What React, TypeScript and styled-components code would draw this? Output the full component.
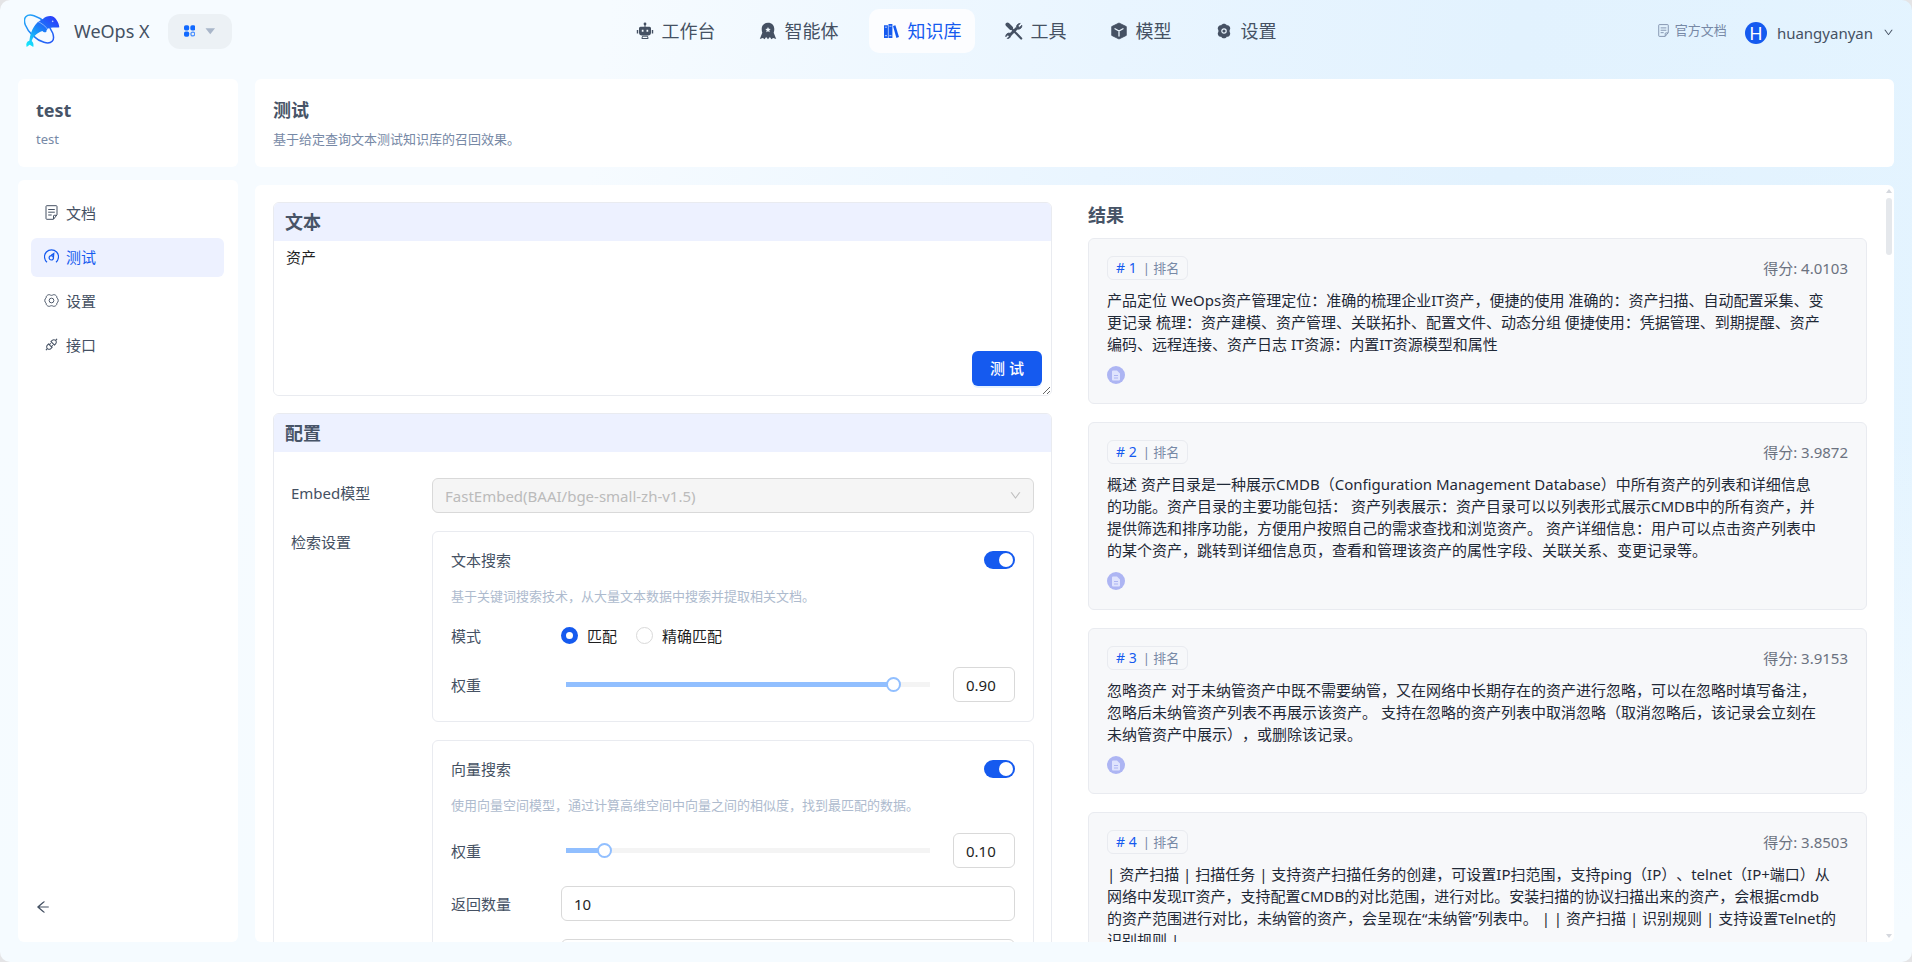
import React, { useState } from 'react';
import styled, { createGlobalStyle } from 'styled-components';
import { AiOutlineApi, AiOutlineArrowLeft, AiOutlineDown } from 'react-icons/ai';

const color = {
  primary: '#155aef',
  heading: '#475467',
  text: '#455163',
  strong: '#1f2937',
  muted: '#7789a6',
  hint: '#aebbce',
  line: '#e9ebf0',
  inputLine: '#d9d9d9',
  band: '#edf1ff',
};

const GlobalStyle = createGlobalStyle`
  * { box-sizing: border-box; }
  body {
    margin: 0;
    background: #e4e4e6;
    color: ${color.text};
    font-family: "Noto Sans", "Noto Sans CJK SC", sans-serif;
    font-size: 15px;
    line-height: 22px;
    text-spacing-trim: space-all;
  }
  button, input, select, textarea { font: inherit; color: inherit; margin: 0; }
  h1, h2, p, ul, ol { margin: 0; padding: 0; }
  ul, ol { list-style: none; }
  a { color: inherit; text-decoration: none; }
`;

const Page = styled.div`
  display: flex;
  flex-direction: column;
  height: 100vh;
  overflow: hidden;
  border-radius: 10px;
  background:
    linear-gradient(180deg, rgba(245, 251, 255, 0) 45%, #f5fbff 96%),
    linear-gradient(97deg, #f6fbff 0%, #f6fbff 30%, #e9f5ff 55%, #e2f2fe 75%, #e4f4ff 100%);
`;

/* ---------- header ---------- */

const Header = styled.header`
  display: grid;
  grid-template-columns: 1fr auto 1fr;
  align-items: center;
  flex: none;
  height: 62px;
  padding: 0 18px;
`;

const Brand = styled.div`
  display: flex;
  align-items: center;
  padding-left: 6px;
`;

const BrandName = styled.span`
  margin: 0 18px 0 14px;
  font-size: 18px;
`;

const AppSwitch = styled.button`
  display: flex;
  align-items: center;
  gap: 10px;
  height: 35px;
  width: 64px;
  padding: 0 16px;
  border: 0;
  border-radius: 12px;
  background: #ecf1f5;
`;

const Nav = styled.nav`
  display: flex;
  gap: 17px;
`;

const NavItem = styled.a<{ $active?: boolean }>`
  display: flex;
  align-items: center;
  gap: 8px;
  height: 44px;
  padding: 0 13px;
  border-radius: 10px;
  font-size: 18px;
  color: ${(p) => (p.$active ? color.primary : color.text)};
  background: ${(p) => (p.$active ? '#fcfdff' : 'transparent')};
`;

const Account = styled.div`
  display: flex;
  align-items: center;
  justify-content: flex-end;
  gap: 18px;
`;

const DocLink = styled.a`
  display: flex;
  align-items: center;
  gap: 5px;
  padding-bottom: 2px;
  font-size: 13px;
  color: ${color.muted};
`;

const UserButton = styled.button`
  display: flex;
  align-items: center;
  gap: 10px;
  padding: 3px 0 0;
  border: 0;
  background: none;
  svg { width: 11px; height: 11px; }
`;

const Avatar = styled.span`
  width: 22px;
  height: 22px;
  border-radius: 50%;
  background: ${color.primary};
  color: #fff;
  font-size: 18px;
  line-height: 22px;
  text-align: center;
`;

/* ---------- page frame ---------- */

const Frame = styled.div`
  display: flex;
  flex: 1;
  gap: 17px;
  min-height: 0;
  padding: 17px 18px 20px;
`;

const Card = styled.section`
  border-radius: 6px;
  background: #fff;
`;

const Side = styled.aside`
  display: flex;
  flex-direction: column;
  flex: none;
  gap: 13px;
  width: 220px;
`;

const Main = styled.main`
  display: flex;
  flex-direction: column;
  flex: 1;
  gap: 18px;
  min-width: 0;
`;

const TitleCard = styled(Card)`
  flex: none;
  height: 88px;
  padding: 19px 18px;
`;

const Title = styled.h1`
  font-size: 18px;
  line-height: 24px;
  color: ${color.heading};
`;

const SubTitle = styled.p`
  margin-top: 6px;
  font-size: 13px;
  color: ${color.muted};
`;

const MenuCard = styled(Card)`
  display: flex;
  flex: 1;
  flex-direction: column;
  justify-content: space-between;
  padding: 14px 14px 25px 13px;
`;

const Menu = styled.ul`
  display: flex;
  flex-direction: column;
  gap: 5px;
`;

const MenuLink = styled.a<{ $active?: boolean }>`
  display: flex;
  align-items: center;
  gap: 7px;
  height: 39px;
  padding: 0 13px 2px;
  border-radius: 6px;
  color: ${(p) => (p.$active ? color.primary : color.text)};
  background: ${(p) => (p.$active ? color.band : 'transparent')};
  svg { width: 15px; height: 15px; }
`;

const BackButton = styled.button`
  display: flex;
  width: 20px;
  height: 20px;
  margin-left: 2px;
  padding: 2px;
  border: 0;
  background: none;
  svg { width: 16px; height: 16px; }
`;

const Content = styled(Card)`
  display: flex;
  flex: 1;
  min-height: 0;
  overflow: hidden;
  padding-left: 18px;
`;

const Columns = styled.div`
  display: grid;
  grid-template-columns: 1fr 1fr;
  gap: 36px;
  flex: 1;
  min-width: 0;
  padding-top: 17px;
  align-items: start;
`;

const ScrollBar = styled.div`
  display: flex;
  flex-direction: column;
  align-items: center;
  flex: none;
  width: 8px;
  margin: 3px 1px 3px 18px;
`;

const ScrollArrow = styled.span<{ $down?: boolean }>`
  border: 3px solid transparent;
  border-top-width: ${(p) => (p.$down ? 4 : 0)}px;
  border-bottom-width: ${(p) => (p.$down ? 0 : 4)}px;
  border-top-color: ${(p) => (p.$down ? '#d5d8de' : 'transparent')};
  border-bottom-color: ${(p) => (p.$down ? 'transparent' : '#d5d8de')};
  margin: 1px 0;
`;

const ScrollThumb = styled.span`
  width: 6px;
  height: 57px;
  margin: 4px 0 auto;
  border-radius: 3px;
  background: #e5e8ec;
`;

/* ---------- left column ---------- */

const Panels = styled.div`
  display: flex;
  flex-direction: column;
  gap: 17px;
`;

const Panel = styled.section`
  position: relative;
  overflow: hidden;
  border: 1px solid ${color.line};
  border-radius: 6px;
`;

const PanelTitle = styled.h2`
  padding: 7px 11px;
  font-size: 18px;
  line-height: 24px;
  color: ${color.heading};
  background: ${color.band};
`;

const QueryBox = styled.textarea`
  display: block;
  width: 100%;
  height: 154px;
  padding: 5px 12px;
  border: 0;
  outline: 0;
  resize: vertical;
  color: #1f1f1f;
  background: #fff;
`;

const TestButton = styled.button`
  position: absolute;
  right: 9px;
  bottom: 9px;
  width: 70px;
  height: 35px;
  padding: 0 0 2px;
  border: 0;
  border-radius: 6px;
  color: #fff;
  font-weight: 500;
  background: ${color.primary};
  box-shadow: 0 2px 0 rgba(5, 125, 255, 0.1);
`;

const Form = styled.div`
  display: grid;
  grid-template-columns: 141px 1fr;
  row-gap: 18px;
  padding: 26px 17px 26px;
`;

const FormLabel = styled.label<{ $multiline?: boolean }>`
  padding-top: ${(p) => (p.$multiline ? 0 : 4)}px;
`;

const SelectWrap = styled.div`
  position: relative;
  svg {
    position: absolute;
    right: 12px;
    top: 11px;
    width: 13px;
    height: 13px;
    color: #bfbfbf;
  }
`;

const Select = styled.select`
  appearance: none;
  display: block;
  width: 100%;
  height: 35px;
  padding: 0 12px;
  border: 1px solid ${color.inputLine};
  border-radius: 6px;
  color: #bbb;
  opacity: 1;
  background: #f5f5f5;
`;

const Boxes = styled.div`
  display: flex;
  flex-direction: column;
  gap: 18px;
`;

const Box = styled.fieldset`
  display: flex;
  flex-direction: column;
  min-width: 0;
  margin: 0;
  padding: 16px 18px 19px;
  border: 1px solid ${color.line};
  border-radius: 6px;
`;

const BoxHead = styled.div`
  display: flex;
  align-items: center;
  justify-content: space-between;
  height: 24px;
`;

const Hint = styled.p`
  margin: 13px 0 17px;
  font-size: 13px;
  color: ${color.hint};
`;

const Row = styled.div`
  display: flex;
  align-items: center;
  height: 35px;
  & + & { margin-top: 18px; }
`;

const ModeRow = styled(Row)`
  height: 23px;
  & + ${Row} { margin-top: 20px; }
`;

const RowLabel = styled.label`
  flex: none;
  width: 110px;
`;

const Switch = styled.input`
  appearance: none;
  display: flex;
  width: 31px;
  height: 18px;
  padding: 2px;
  border-radius: 9px;
  background: #bfbfbf;
  &::before {
    content: '';
    width: 14px;
    height: 14px;
    border-radius: 50%;
    background: #fff;
  }
  &:checked { justify-content: flex-end; background: ${color.primary}; }
`;

const RadioLabel = styled.label`
  display: flex;
  align-items: center;
  gap: 9px;
  margin-right: 19px;
  color: #1f1f1f;
`;

const Radio = styled.input`
  appearance: none;
  width: 17px;
  height: 17px;
  border: 1px solid ${color.inputLine};
  border-radius: 50%;
  background: #fff;
  &:checked { border: 5px solid ${color.primary}; }
`;

const Slider = styled.input<{ $fill: number }>`
  appearance: none;
  flex: 1;
  min-width: 0;
  height: 15px;
  margin-right: 16px;
  background: none;
  &::-webkit-slider-runnable-track {
    height: 5px;
    margin: 0;
    border-radius: 2px;
    background: linear-gradient(
        90deg,
        transparent 5px,
        #91bfff 5px,
        #91bfff ${(p) => p.$fill}%,
        #f4f4f4 ${(p) => p.$fill}%,
        #f4f4f4 calc(100% - 7px),
        transparent calc(100% - 7px)
      );
  }
  &::-webkit-slider-thumb {
    appearance: none;
    width: 15px;
    height: 15px;
    margin-top: -5px;
    border: 2px solid #91bfff;
    border-radius: 50%;
    background: #fff;
  }
`;

const Input = styled.input<{ $short?: boolean }>`
  flex: ${(p) => (p.$short ? 'none' : '1')};
  width: ${(p) => (p.$short ? '62px' : 'auto')};
  min-width: 0;
  height: 35px;
  padding: 0 12px;
  border: 1px solid ${color.inputLine};
  border-radius: 6px;
  color: #1f1f1f;
  background: #fff;
`;

/* ---------- results ---------- */

const ResultsTitle = styled.h2`
  margin: 1px 0 11px;
  font-size: 18px;
  line-height: 24px;
  color: ${color.heading};
`;

const ResultList = styled.ol`
  display: flex;
  flex-direction: column;
  gap: 18px;
`;

const ResultCard = styled.li`
  padding: 17px 18px 19px;
  border: 1px solid ${color.line};
  border-radius: 6px;
  background: #f7f8fa;
`;

const ResultHead = styled.div`
  display: flex;
  align-items: center;
  justify-content: space-between;
  color: #6b7280;
`;

const Rank = styled.span`
  display: flex;
  align-items: center;
  gap: 6px;
  height: 24px;
  padding: 0 8px;
  border: 1px solid ${color.line};
  border-radius: 6px;
  font-size: 13px;
  color: ${color.muted};
  b { font-size: 14px; font-weight: 400; color: ${color.primary}; }
`;

const ResultText = styled.p`
  margin: 9px 0 11px;
  color: ${color.strong};
  white-space: pre-line;
`;

const FileBadge = styled.a`
  display: flex;
  align-items: center;
  justify-content: center;
  width: 18px;
  height: 18px;
  border-radius: 50%;
  background: #adb5f3;
`;

/* ---------- drawings ---------- */

const Logo = () => (
  <svg width="36" height="34" viewBox="71 42 108 102" aria-hidden="true">
    <defs>
      <linearGradient id="fish" x1="0.9" y1="0.1" x2="0.15" y2="1">
        <stop offset="0" stopColor="#2a3ffb" />
        <stop offset="0.45" stopColor="#1c7df8" />
        <stop offset="1" stopColor="#16e4fb" />
      </linearGradient>
      <linearGradient id="ring" x1="0" y1="0.5" x2="1" y2="0.5">
        <stop offset="0" stopColor="#23a5f8" />
        <stop offset="1" stopColor="#2459f6" />
      </linearGradient>
    </defs>
    <ellipse cx="116" cy="87" rx="54" ry="27" transform="rotate(43 116 87)" fill="none" stroke="url(#ring)" strokeWidth="4.500" />
    <path
      d="M177 82C176 68 165 48 150 48C141 48 133 51 127 58C106 66 92 88 87 122C79 124 76 131 79 141L88 134L99 141C101 132 98 126 94 123C99 108 110 99 126 93C129 97 134 98 138 96C138 91 140 88 146 84C156 80 168 84 177 82Z"
      fill="url(#fish)"
    />
    <path d="M108 62C124 69 138 80 146 93" fill="none" stroke="#e8f3ff" strokeWidth="1.500" />
    <circle cx="157" cy="64" r="2.500" fill="#bfd4ff" />
  </svg>
);

const AppsIcon = () => (
  <svg width="12" height="12" viewBox="0 0 12 12" aria-hidden="true" fill="#1169ff">
    <rect x="0" y="0" width="5.400" height="5.400" rx="1.800" />
    <rect x="6.600" y="0" width="5.400" height="5.400" rx="1.800" />
    <rect x="0" y="6.600" width="5.400" height="5.400" rx="1.800" />
    <circle cx="9.200" cy="9.200" r="2" fill="none" stroke="#4a90ff" strokeWidth="1.300" />
  </svg>
);

const Caret = () => (
  <svg width="11" height="7" viewBox="0 0 11 7" aria-hidden="true">
    <path d="M0.500 0H10.500L5.500 6.500Z" fill="#a9b6c9" />
  </svg>
);

const RobotIcon = () => (
  <svg width="18" height="18" viewBox="0 0 18 18" aria-hidden="true" fill="currentColor">
    <circle cx="9" cy="2" r="1.400" />
    <path d="M8.500 2h1v3h-1zM0.800 8h1.400v3.400H0.800zM15.800 8h1.400v3.400h-1.400z" />
    <path fillRule="evenodd" d="M4.500 4.800h9a1.500 1.500 0 0 1 1.500 1.500V10.500a3 3 0 0 1-3 3H6a3 3 0 0 1-3-3V6.300a1.500 1.500 0 0 1 1.500-1.500zM5.800 7.800v2h1.700V7.800zM10.500 7.800v2h1.700V7.800z" />
    <path d="M6.500 14.200h5l.6 2.300H5.900z" fill="none" stroke="currentColor" />
  </svg>
);

const AgentIcon = () => (
  <svg width="18" height="18" viewBox="0 0 18 18" aria-hidden="true" fill="currentColor">
    <path
      fillRule="evenodd"
      d="M9 .8c3.900 0 6.300 2.700 6.300 6.200 0 1.600-.2 2.700-.6 3.800L17.200 17l-3.100-1-1.700 1.300-1.500-2.300-1.900 2.300L7.100 15l-1.500 2.300L3.900 16l-3.100 1 2.500-6.200C2.900 9.700 2.700 8.600 2.700 7 2.700 3.500 5.100.8 9 .8zM9 5l-.8 1.800-1.900.2 1.400 1.300-.4 1.900L9 9.200l1.700 1-.4-1.900L11.700 7l-1.900-.2z"
    />
  </svg>
);

const BooksIcon = () => (
  <svg width="18" height="18" viewBox="0 0 18 18" aria-hidden="true" fill="currentColor">
    <path d="M2 3.300h3.900V16H2zM6.500 2h3.900v14H6.500z" />
    <path d="M11 4l2.400-.8 3.600 11.900-2.600.9z" />
    <path d="M2.900 5.200h2.100M7.400 4.200h2.100M2.900 13.700h2.100M7.400 13.700h2.100" stroke="#fff" strokeWidth="0.700" />
  </svg>
);

const ToolsIcon = () => (
  <svg width="18" height="18" viewBox="0 0 18 18" aria-hidden="true" fill="none" stroke="currentColor">
    <path d="M2.500 2.500L6 6" strokeWidth="4" strokeLinecap="round" />
    <path d="M6 6l10.200 10.500" strokeWidth="2.200" strokeLinecap="round" />
    <path d="M12 6L5 13" strokeWidth="2.800" />
    <path d="M15.300 1.500l-2.100 2.100.3 1.300 1.300.3 2-2a3.300 3.300 0 0 1-4.500 3.700 3.300 3.300 0 0 1 3-5.400z" fill="currentColor" strokeWidth="0.800" />
    <path d="M2.200 16.500l1.900-1.900-.3-1.200-1.300-.3L.8 14.800a3.200 3.200 0 0 1 4.300-3.500 3.200 3.200 0 0 1-2.900 5.200z" fill="currentColor" strokeWidth="0.800" />
  </svg>
);

const CubeIcon = () => (
  <svg width="18" height="18" viewBox="0 0 18 18" aria-hidden="true">
    <path d="M9 1l7.300 3.600v8.800L9 17l-7.300-3.600V4.600z" fill="currentColor" stroke="currentColor" strokeWidth="0.800" strokeLinejoin="round" />
    <path d="M5 6.800l4 2.200 4-2.200M9 9v5" fill="none" stroke="#eaf5fe" strokeWidth="1.300" strokeLinecap="round" />
  </svg>
);

/* six lobes around a hub */
const gearPath =
  'M9 1.800C10.300 1.800 11.200 2.300 11.700 3.300C12.800 3.200 13.800 3.400 14.600 4.600C15.400 5.900 15.400 6.900 14.800 7.800C14.400 8.500 14.400 9.500 14.800 10.200C15.400 11.100 15.400 12.100 14.600 13.400C13.800 14.600 12.800 14.800 11.700 14.700C11.200 15.700 10.300 16.200 9 16.200C7.700 16.200 6.800 15.700 6.300 14.700C5.200 14.800 4.200 14.600 3.400 13.400C2.600 12.100 2.600 11.100 3.200 10.200C3.600 9.500 3.600 8.500 3.200 7.800C2.600 6.900 2.600 5.900 3.400 4.600C4.200 3.400 5.200 3.200 6.300 3.300C6.800 2.300 7.700 1.800 9 1.800Z';

const GearIcon = () => (
  <svg width="18" height="18" viewBox="0 0 18 18" aria-hidden="true">
    <path d={gearPath} fill="currentColor" />
    <circle cx="9" cy="9" r="2.200" fill="none" stroke="#eaf5fe" strokeWidth="1.200" />
  </svg>
);

const GearOutlineIcon = () => (
  <svg viewBox="1 1 16 16" aria-hidden="true" fill="none" stroke="currentColor">
    <path d={gearPath} transform="rotate(90 9 9)" />
    <circle cx="9" cy="9" r="2.500" />
  </svg>
);

const NoteIcon = ({ size = 15 }: { size?: number }) => (
  <svg width={size} height={size} viewBox="0 0 15 15" aria-hidden="true" fill="none" stroke="currentColor">
    <path d="M13 9.800V1.500a.8.800 0 0 0-.8-.8H2.800a.8.800 0 0 0-.8.800v12a.8.800 0 0 0 .8.800H9.500z" />
    <path d="M13 10.300H10.200a.7.700 0 0 0-.7.700v3" />
    <path d="M4.200 4.500h6.600M4.200 7.200h6.600M4.200 10h3.500" />
  </svg>
);

const GaugeIcon = () => (
  <svg viewBox="0 0 15 15" aria-hidden="true" fill="none" stroke="currentColor" strokeWidth="1.200">
    <path d="M3 13.200A7 7 0 1 1 12 13.200" />
    <circle cx="7.300" cy="8.800" r="2.200" />
    <path d="M9.400 8.800L9.800 4.400L7.200 6.300" />
  </svg>
);

const FileIcon = () => (
  <svg width="10" height="11" viewBox="0 0 10 11" aria-hidden="true">
    <path d="M1 1.500A1 1 0 0 1 2 .5h4L9 3.500v6a1 1 0 0 1-1 1H2a1 1 0 0 1-1-1z" fill="#dfe3fd" />
    <path d="M3 5.500h4M3 8h4" stroke="#adb5f3" fill="none" />
  </svg>
);

/* ---------- data ---------- */

const navItems = [
  { label: '工作台', icon: <RobotIcon /> },
  { label: '智能体', icon: <AgentIcon /> },
  { label: '知识库', icon: <BooksIcon />, active: true },
  { label: '工具', icon: <ToolsIcon /> },
  { label: '模型', icon: <CubeIcon /> },
  { label: '设置', icon: <GearIcon /> },
];

const menuItems = [
  { label: '文档', icon: <NoteIcon /> },
  { label: '测试', icon: <GaugeIcon />, active: true },
  { label: '设置', icon: <GearOutlineIcon /> },
  { label: '接口', icon: <AiOutlineApi /> },
];

const results = [
  {
    score: '4.0103',
    lines: [
      '产品定位 WeOps资产管理定位：准确的梳理企业IT资产，便捷的使用 准确的：资产扫描、自动配置采集、变',
      '更记录 梳理：资产建模、资产管理、关联拓扑、配置文件、动态分组 便捷使用：凭据管理、到期提醒、资产',
      '编码、远程连接、资产日志 IT资源：内置IT资源模型和属性',
    ],
  },
  {
    score: '3.9872',
    lines: [
      '概述 资产目录是一种展示CMDB（Configuration Management Database）中所有资产的列表和详细信息',
      '的功能。资产目录的主要功能包括： 资产列表展示：资产目录可以以列表形式展示CMDB中的所有资产，并',
      '提供筛选和排序功能，方便用户按照自己的需求查找和浏览资产。 资产详细信息：用户可以点击资产列表中',
      '的某个资产，跳转到详细信息页，查看和管理该资产的属性字段、关联关系、变更记录等。',
    ],
  },
  {
    score: '3.9153',
    lines: [
      '忽略资产 对于未纳管资产中既不需要纳管，又在网络中长期存在的资产进行忽略，可以在忽略时填写备注，',
      '忽略后未纳管资产列表不再展示该资产。 支持在忽略的资产列表中取消忽略（取消忽略后，该记录会立刻在',
      '未纳管资产中展示），或删除该记录。',
    ],
  },
  {
    score: '3.8503',
    lines: [
      '| 资产扫描 | 扫描任务 | 支持资产扫描任务的创建，可设置IP扫范围，支持ping（IP）、telnet（IP+端口）从',
      '网络中发现IT资产，支持配置CMDB的对比范围，进行对比。安装扫描的协议扫描出来的资产，会根据cmdb',
      '的资产范围进行对比，未纳管的资产，会呈现在“未纳管”列表中。 | | 资产扫描 | 识别规则 | 支持设置Telnet的',
      '识别规则 |',
    ],
  },
];

function WeightRow({ id, initial }: { id: string; initial: number }) {
  const [value, setValue] = useState(initial);
  return (
    <Row>
      <RowLabel htmlFor={id}>权重</RowLabel>
      <Slider
        id={id}
        type="range"
        min={0}
        max={1}
        step={0.01}
        value={value}
        $fill={value * 100}
        onChange={(e) => setValue(Number(e.target.value))}
      />
      <Input
        $short
        aria-label="权重"
        value={value.toFixed(2)}
        onChange={(e) => setValue(Number(e.target.value) || 0)}
      />
    </Row>
  );
}

export default function App() {
  return (
    <Page>
      <GlobalStyle />
      <Header>
        <Brand>
          <Logo />
          <BrandName>WeOps X</BrandName>
          <AppSwitch type="button" aria-label="apps">
            <AppsIcon />
            <Caret />
          </AppSwitch>
        </Brand>
        <Nav>
          {navItems.map((item) => (
            <NavItem key={item.label} href="#" $active={item.active}>
              {item.icon}
              {item.label}
            </NavItem>
          ))}
        </Nav>
        <Account>
          <DocLink href="#">
            <NoteIcon size={13} />
            官方文档
          </DocLink>
          <UserButton type="button">
            <Avatar>H</Avatar>
            huangyanyan
            <AiOutlineDown />
          </UserButton>
        </Account>
      </Header>

      <Frame>
        <Side>
          <TitleCard>
            <Title as="h2">test</Title>
            <SubTitle>test</SubTitle>
          </TitleCard>
          <MenuCard>
            <Menu>
              {menuItems.map((item) => (
                <li key={item.label}>
                  <MenuLink href="#" $active={item.active}>
                    {item.icon}
                    {item.label}
                  </MenuLink>
                </li>
              ))}
            </Menu>
            <BackButton type="button" aria-label="back">
              <AiOutlineArrowLeft />
            </BackButton>
          </MenuCard>
        </Side>

        <Main>
          <TitleCard>
            <Title>测试</Title>
            <SubTitle>基于给定查询文本测试知识库的召回效果。</SubTitle>
          </TitleCard>

          <Content>
            <Columns>
              <Panels>
                <Panel>
                  <PanelTitle id="query-title">文本</PanelTitle>
                  <QueryBox aria-labelledby="query-title" defaultValue="资产" />
                  <TestButton type="button">测 试</TestButton>
                </Panel>

                <Panel>
                  <PanelTitle>配置</PanelTitle>
                  <Form>
                    <FormLabel htmlFor="embed">Embed模型</FormLabel>
                    <SelectWrap>
                      <Select id="embed" disabled>
                        <option>FastEmbed(BAAI/bge-small-zh-v1.5)</option>
                      </Select>
                      <AiOutlineDown />
                    </SelectWrap>

                    <FormLabel as="span" $multiline>
                      检索设置
                    </FormLabel>
                    <Boxes>
                      <Box>
                        <BoxHead>
                          <label htmlFor="text-search">文本搜索</label>
                          <Switch id="text-search" type="checkbox" role="switch" defaultChecked />
                        </BoxHead>
                        <Hint>基于关键词搜索技术，从大量文本数据中搜索并提取相关文档。</Hint>
                        <ModeRow role="radiogroup" aria-label="模式">
                          <RowLabel as="span">模式</RowLabel>
                          <RadioLabel>
                            <Radio type="radio" name="mode" defaultChecked />
                            匹配
                          </RadioLabel>
                          <RadioLabel>
                            <Radio type="radio" name="mode" />
                            精确匹配
                          </RadioLabel>
                        </ModeRow>
                        <WeightRow id="text-weight" initial={0.9} />
                      </Box>

                      <Box>
                        <BoxHead>
                          <label htmlFor="vector-search">向量搜索</label>
                          <Switch id="vector-search" type="checkbox" role="switch" defaultChecked />
                        </BoxHead>
                        <Hint>使用向量空间模型，通过计算高维空间中向量之间的相似度，找到最匹配的数据。</Hint>
                        <WeightRow id="vector-weight" initial={0.1} />
                        <Row>
                          <RowLabel htmlFor="count">返回数量</RowLabel>
                          <Input id="count" defaultValue="10" />
                        </Row>
                        <Row>
                          <RowLabel as="span" />
                          <Input aria-label="candidates" />
                        </Row>
                      </Box>
                    </Boxes>
                  </Form>
                </Panel>
              </Panels>

              <div>
                <ResultsTitle>结果</ResultsTitle>
                <ResultList>
                  {results.map((result, index) => (
                    <ResultCard key={result.score}>
                      <ResultHead>
                        <Rank>
                          <b># {index + 1}</b>
                          <span>| 排名</span>
                        </Rank>
                        <span>得分: {result.score}</span>
                      </ResultHead>
                      <ResultText>{result.lines.join('\n')}</ResultText>
                      <FileBadge href="#" aria-label="file">
                        <FileIcon />
                      </FileBadge>
                    </ResultCard>
                  ))}
                </ResultList>
              </div>
            </Columns>
            <ScrollBar aria-hidden="true">
              <ScrollArrow />
              <ScrollThumb />
              <ScrollArrow $down />
            </ScrollBar>
          </Content>
        </Main>
      </Frame>
    </Page>
  );
}
